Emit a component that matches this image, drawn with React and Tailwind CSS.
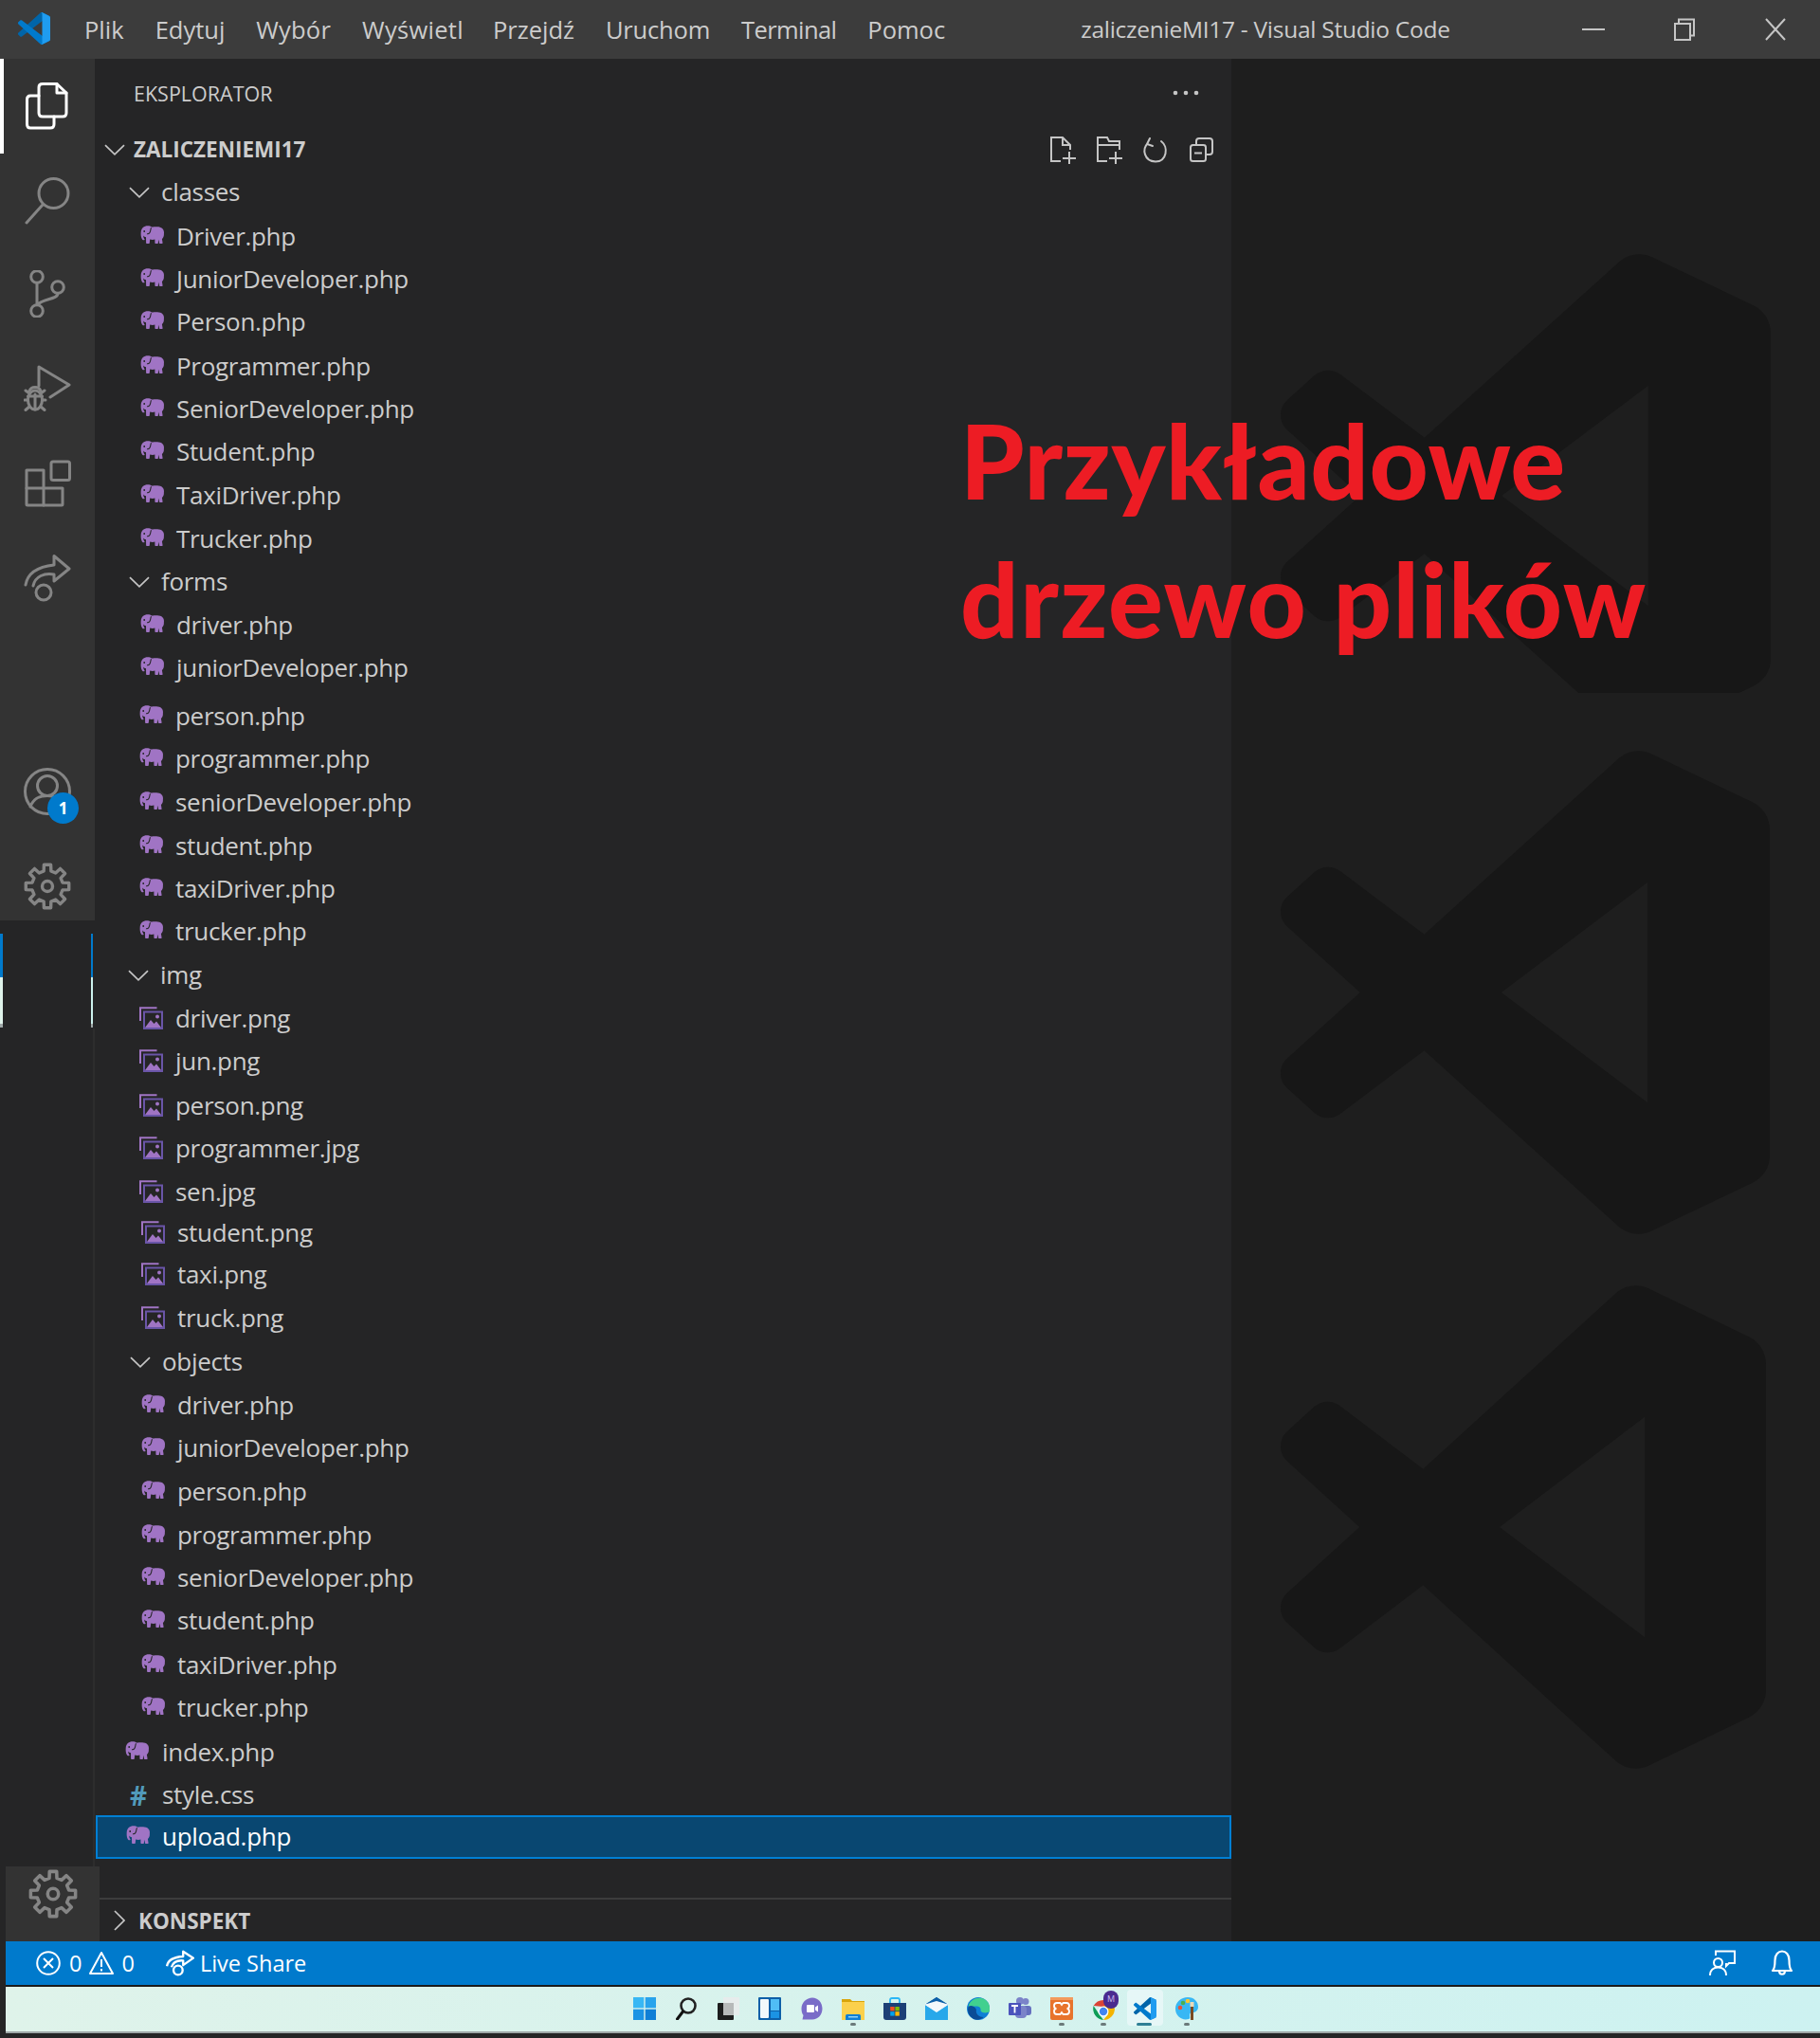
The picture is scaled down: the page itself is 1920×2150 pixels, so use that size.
import React from "react";

const A = "#858585";

function gearPath(cx, cy, R, r, teeth) {
  const pts = [];
  const step = (Math.PI * 2) / teeth;
  for (let i = 0; i < teeth; i++) {
    const a = i * step - Math.PI / 2;
    const w = step * 0.2;
    const v = step * 0.3;
    const p = (rad, ang) => `${(cx + rad * Math.cos(ang)).toFixed(2)} ${(cy + rad * Math.sin(ang)).toFixed(2)}`;
    pts.push(p(r, a - v), p(R, a - w), p(R, a + w), p(r, a + v));
  }
  return "M" + pts.join(" L") + " Z";
}

function Gear({ className = "w-[50px] h-[50px]" }) {
  return (
    <svg viewBox="0 0 50 50" className={className} fill="none" stroke={A} strokeWidth="3.4" strokeLinejoin="round">
      <path d={gearPath(25, 25, 23, 16.5, 8)} />
      <circle cx="25" cy="25" r="5.5" />
    </svg>
  );
}

const Svg = ({ children, sw = 3, color = A }) => (
  <svg viewBox="0 0 50 50" className="w-[50px] h-[50px]" fill="none" stroke={color} strokeWidth={sw} strokeLinejoin="round" strokeLinecap="round">
    {children}
  </svg>
);

const LOGO_M = "M70.9119 99.3171C72.4869 99.9307 74.2828 99.8914 75.8725 99.1264L96.4608 89.2197C98.6242 88.1787 100 85.9892 100 83.5872V16.4133C100 14.0113 98.6243 11.8218 96.4609 10.7808L75.8725 0.873756C73.7862 -0.130129 71.3446 0.11576 69.5135 1.44695C69.252 1.63711 69.0028 1.84943 68.769 2.08341L29.3551 38.0415L12.1872 25.0096C10.589 23.7965 8.35363 23.8959 6.86933 25.2461L1.36303 30.2549C-0.452552 31.9064 -0.454633 34.7627 1.35853 36.417L16.2471 50.0001L1.35853 63.5832C-0.454633 65.2374 -0.452552 68.0938 1.36303 69.7453L6.86933 74.7541C8.35363 76.1043 10.589 76.2037 12.1872 74.9905L29.3551 61.9587L68.769 97.9167C69.3925 98.5406 70.1246 99.0104 70.9119 99.3171ZM75.0152 27.2989L45.1091 50.0001L75.0152 72.7012V27.2989Z";

function VSLogo({ className }) {
  return (
    <svg viewBox="0 0 100 100" className={className}>
      <path fill="#0065A9" d="M96.4614 10.7962L75.8569 0.875542C73.4719 -0.272773 70.6217 0.211611 68.75 2.08333L1.29858 63.5832C-0.515693 65.2373 -0.513607 68.0937 1.30308 69.7452L6.81272 74.754C8.29793 76.1042 10.5347 76.2036 12.1338 74.9905L93.3609 13.3699C96.086 11.3026 100 13.2462 100 16.6667V16.4275C100 14.0265 98.6246 11.8378 96.4614 10.7962Z" />
      <path fill="#007ACC" d="M96.4614 89.2038L75.8569 99.1245C73.4719 100.273 70.6217 99.7884 68.75 97.9167L1.29858 36.4169C-0.515693 34.7627 -0.513607 31.9063 1.30308 30.2548L6.81272 25.246C8.29793 23.8958 10.5347 23.7964 12.1338 25.0095L93.3609 86.6301C96.086 88.6974 100 86.7538 100 83.3334V83.5726C100 85.9735 98.6246 88.1622 96.4614 89.2038Z" />
      <path fill="#1F9CF0" d="M75.8578 99.1263C73.4721 100.274 70.6219 99.7885 68.75 97.9166C71.0564 100.223 75 98.5895 75 95.3278V4.67213C75 1.41039 71.0564 -0.223106 68.75 2.08329C70.6219 0.211402 73.4721 -0.273666 75.8578 0.873633L96.4587 10.7807C98.6234 11.8217 100 14.0112 100 16.4132V83.5871C100 85.9891 98.6234 88.1786 96.4586 89.2196L75.8578 99.1263Z" />
    </svg>
  );
}

const Watermark = ({ className }) => (
  <svg viewBox="0 0 100 100" preserveAspectRatio="none" className={className}>
    <path fill="#171717" fillRule="evenodd" d={LOGO_M} />
  </svg>
);

function Elephant() {
  return (
    <svg viewBox="0 0 26 20" className="w-[26px] h-[20px] shrink-0 mt-[-4px]">
      <path fill="#a074c4" d="M8 .3C3.8.3.9 3 .7 7c-.2 2.6 0 5 1 7 .7 1.5 2.4 1.7 3 .4-1-.6-1.5-2.2-1.4-3.8.6 1 1.6 1.5 2.7 1.6l.1 6.1c0 .4.3.7.7.7h2.3c.4 0 .7-.3.7-.7l.4-3.8c1.7.5 3.5.5 5.2.1v3.7c0 .4.3.7.7.7h2c.4 0 .6-.3.7-.6l.5-3.6.8 3.6c.1.4.4.6.7.6h2.2c.4 0 .7-.4.6-.8l-.7-4.2c1.4-1.2 2.2-3 2-5.2C25.7 4 22.500 1.300 18 1.300c-2.500 0-4.600.2-6 .2C11 .7 9.600.3 8 .3Z" />
      <path fill="none" stroke="#252526" strokeWidth="1.1" d="M11.500 2.200c-.8 1.400-.3 3.200-1.600 5.300-.6 1-1.700 1.400-2.900 1.200" />
      <circle cx="4.200" cy="6" r=".9" fill="#252526" />
    </svg>
  );
}

function ImgIcon() {
  return (
    <svg viewBox="0 0 25 24" className="w-[25px] h-[24px] shrink-0 mt-[-2px] mr-[1px]" fill="none">
      <path d="M1 15V1.200H18.500" stroke="#a074c4" strokeWidth="2" />
      <rect x="5" y="5.500" width="19" height="17.500" stroke="#6a55a8" strokeWidth="2" />
      <path d="M6 22l6-8 3.500 4 2.500-2.500 5 6.500Z" fill="#a074c4" />
      <circle cx="19" cy="10.500" r="2" fill="#a074c4" />
    </svg>
  );
}

const Chevron = () => (
  <svg viewBox="0 0 22 12" className="w-[22px] h-[12px] shrink-0" fill="none" stroke="#c5c5c5" strokeWidth="1.700">
    <path d="M1 1.200 11 10.800 21 1.200" />
  </svg>
);

const tree = [
  ["classes", "f", "a", ""],
  ["Driver.php", "p", "a", "mt-[5px]"],
  ["JuniorDeveloper.php", "p", "a", "mt-[3px]"],
  ["Person.php", "p", "a", "mt-[3px]"],
  ["Programmer.php", "p", "a", "mt-[5px]"],
  ["SeniorDeveloper.php", "p", "a", "mt-[3px]"],
  ["Student.php", "p", "a", "mt-[3px]"],
  ["TaxiDriver.php", "p", "a", "mt-[4px]"],
  ["Trucker.php", "p", "a", "mt-[4px]"],
  ["forms", "f", "a", "mt-[3px]"],
  ["driver.php", "p", "a", "mt-[4px]"],
  ["juniorDeveloper.php", "p", "a", "mt-[3px]"],
  ["person.php", "p", "b", "mt-[9px]"],
  ["programmer.php", "p", "b", "mt-[3px]"],
  ["seniorDeveloper.php", "p", "b", "mt-[4px]"],
  ["student.php", "p", "b", "mt-[4px]"],
  ["taxiDriver.php", "p", "b", "mt-[3px]"],
  ["trucker.php", "p", "b", "mt-[3px]"],
  ["img", "f", "b", "mt-[4px]"],
  ["driver.png", "i", "b", "mt-[4px]"],
  ["jun.png", "i", "b", "mt-[3px]"],
  ["person.png", "i", "b", "mt-[5px]"],
  ["programmer.jpg", "i", "b", "mt-[3px]"],
  ["sen.jpg", "i", "b", "mt-[4px]"],
  ["student.png", "i", "c", "mt-[1px]"],
  ["taxi.png", "i", "c", "mt-[2px]"],
  ["truck.png", "i", "c", "mt-[4px]"],
  ["objects", "f", "c", "mt-[4px]"],
  ["driver.php", "p", "c", "mt-[4px]"],
  ["juniorDeveloper.php", "p", "c", "mt-[3px]"],
  ["person.php", "p", "c", "mt-[4px]"],
  ["programmer.php", "p", "c", "mt-[4px]"],
  ["seniorDeveloper.php", "p", "c", "mt-[3px]"],
  ["student.php", "p", "c", "mt-[3px]"],
  ["taxiDriver.php", "p", "c", "mt-[5px]"],
  ["trucker.php", "p", "c", "mt-[3px]"],
];

const FOLDER_PAD = { a: "pl-[36px] gap-[12px]", b: "pl-[35px] gap-[12px]", c: "pl-[37px] gap-[12px]" };
const FILE_PAD = { a: "pl-[48px] gap-[12px]", b: "pl-[47px] gap-[12px]", c: "pl-[49px] gap-[12px]" };

function Row({ name, kind, group, mt }) {
  if (kind === "f") {
    return (
      <div className={`flex items-center h-[42px] ${FOLDER_PAD[group]} ${mt}`}>
        <Chevron />
        <span className="mt-[-1px]">{name}</span>
      </div>
    );
  }
  return (
    <div className={`flex items-center h-[42px] ${FILE_PAD[group]} ${mt}`}>
      {kind === "p" ? <Elephant /> : <ImgIcon />}
      <span className="mt-[-1px]">{name}</span>
    </div>
  );
}

const menu = [
  ["Plik", ""],
  ["Edytuj", ""],
  ["Wybór", "tracking-[0.2px]"],
  ["Wyświetl", "tracking-[0.3px]"],
  ["Przejdź", "ml-[-2px]"],
  ["Uruchom", "tracking-[-0.2px]"],
  ["Terminal", "tracking-[-0.6px]"],
  ["Pomoc", ""],
];

function TitleBar() {
  return (
    <div className="h-[62px] bg-[#3c3c3c] flex items-center text-[#cccccc] shrink-0">
      <VSLogo className="w-[34px] h-[34px] ml-[19px] mt-[-3px]" />
      <div className="flex gap-[33px] ml-[36px] text-[25.500px]">
        {menu.map(([m, c]) => (
          <span key={m} className={c}>{m}</span>
        ))}
      </div>
      <span className="ml-[143px] text-[24.500px] tracking-[-0.27px]">zaliczenieMI17 - Visual Studio Code</span>
      <div className="ml-auto flex items-center mr-[35px] gap-[72px]">
        <svg viewBox="0 0 24 24" className="w-[24px] h-[24px]" stroke="#c5c5c5" strokeWidth="2" fill="none"><path d="M0 12H24" /></svg>
        <svg viewBox="0 0 24 24" className="w-[24px] h-[24px]" stroke="#c5c5c5" strokeWidth="2" fill="none"><rect x="2" y="6" width="16" height="17" /><path d="M6 6V1.500H22V18.500H18" /></svg>
        <svg viewBox="0 0 24 24" className="w-[24px] h-[24px]" stroke="#c5c5c5" strokeWidth="2" fill="none"><path d="M2 1 22 23M22 1 2 23" /></svg>
      </div>
    </div>
  );
}

function ActivityBar() {
  const item = "h-[100px] flex items-center justify-center shrink-0";
  return (
    <div className="w-[100px] shrink-0 flex flex-col relative">
      <div className="h-[909px] bg-[#333333] flex flex-col shrink-0">
        <div className={`${item} border-l-4 border-white pr-[4px]`}>
          <Svg color="#ffffff">
            <path d="M20 1.500H35L45 11V32Q45 36 41 36H20Q16 36 16 32V5Q16 1.500 20 1.500Z" />
            <path d="M35 1.500V11H45" />
            <path d="M16 14H7Q3.500 14 3.500 18V44Q3.500 48 7 48H28Q32 48 32 44V36" />
          </Svg>
        </div>
        <div className="h-[98px] pt-[2px] flex items-center justify-center shrink-0">
          <Svg>
            <circle cx="31.500" cy="17" r="15.500" />
            <path d="M20 29 3 48" />
          </Svg>
        </div>
        <div className={item}>
          <Svg>
            <circle cx="14" cy="7" r="6.300" />
            <circle cx="14" cy="43" r="6.300" />
            <circle cx="36" cy="18" r="6.300" />
            <path d="M14 13.500V36.500M36 24.500C36 31 20 30 14.500 36.500" />
          </Svg>
        </div>
        <div className={item}>
          <Svg>
            <path d="M16 22V2L48 21 28 34" />
            <ellipse cx="12" cy="37" rx="7.500" ry="10" />
            <path d="M6 27.500C8 22 16 22 18 27.500M4.500 33H19.500M12 31V47M2 27 6 30M22 27 18 30M1 37H4.500M23 37H19.500M2 47.500 6 44M22 47.500 18 44" />
          </Svg>
        </div>
        <div className={item}>
          <Svg>
            <path d="M3 11H21V30H41V47Q41 48 40 48H4Q3 48 3 47Z" />
            <path d="M21 30V48M3 30H21" />
            <rect x="29" y="2" width="19.500" height="19.500" rx="2" />
          </Svg>
        </div>
        <div className={item}>
          <Svg>
            <circle cx="21" cy="40" r="8" />
            <path d="M2 32C4 20 14 13 32 11V1.500L48 15 32 28V21C22 19 12 23 10 33" />
          </Svg>
        </div>
        <div className="flex-1" />
        <div className={`${item} relative`}>
          <Svg>
            <circle cx="25" cy="25" r="23.500" />
            <circle cx="25" cy="19" r="10.500" />
            <path d="M7 41C11 31 18 29.500 25 29.500S39 31 43 41" />
          </Svg>
          <span className="absolute left-[50px] top-[51px] w-[33px] h-[33px] rounded-full bg-[#007acc] text-white text-[17px] font-bold flex items-center justify-center">1</span>
        </div>
        <div className="h-[86px] shrink-0 flex justify-center pt-[25px]">
          <Gear />
        </div>
      </div>
      <div className="h-[114px] shrink-0 bg-[#252526] flex justify-between">
        <div className="w-[3px] flex flex-col pt-[14px]">
          <div className="h-[46px] bg-[#007acc]" />
          <div className="h-[49px] bg-[#dff3ea]" />
          <div className="h-[4px] bg-[#9fa8a8]" />
        </div>
        <div className="w-[2px] flex flex-col pt-[14px] mr-[2px]">
          <div className="h-[46px] bg-[#007acc]" />
          <div className="h-[49px] bg-[#cdf2ee]" />
          <div className="h-[4px] bg-[#9fa8a8]" />
        </div>
      </div>
      <div className="flex-1 bg-[#252526] border-r-2 border-[#2d2d2d]" />
      <div className="h-[79px] w-[99px] ml-[6px] bg-[#333333] shrink-0 relative flex justify-center pt-[3px]">
        <Gear className="w-[52px] h-[52px]" />
      </div>
    </div>
  );
}

const ActionSvg = ({ children }) => (
  <svg viewBox="0 0 30 30" className="w-[30px] h-[30px]" fill="none" stroke="#c5c5c5" strokeWidth="2">
    {children}
  </svg>
);

function Sidebar() {
  return (
    <div className="w-[1199px] shrink-0 bg-[#252526] flex flex-col text-[#cccccc] text-[26px] tracking-[-0.3px]">
      <div className="h-[72px] flex items-center pl-[41px] text-[21.500px] tracking-normal pr-[34px] shrink-0">
        <span className="mt-[2px]">EKSPLORATOR</span>
        <svg viewBox="0 0 28 6" className="w-[28px] h-[6px] ml-auto" fill="#c5c5c5">
          <circle cx="3" cy="3" r="2.300" />
          <circle cx="14" cy="3" r="2.300" />
          <circle cx="25" cy="3" r="2.300" />
        </svg>
      </div>
      <div className="h-[48px] flex items-center pl-[10px] shrink-0 pr-[16px]">
        <Chevron />
        <span className="ml-[9px] font-bold text-[22.500px] tracking-normal">ZALICZENIEMI17</span>
        <div className="ml-auto flex gap-[19px] mt-[-1px]">
          <ActionSvg>
            <path d="M13 27H3V2H15L23 10V15M15 2V10H23M15 24H29M22 17V30" />
          </ActionSvg>
          <ActionSvg>
            <path d="M13 27H3V2H13L15 6H26V15M3 10H26M15 24H29M22 17V30" />
          </ActionSvg>
          <ActionSvg>
            <path d="M9 3 6 9 12 11M6.500 8.500C1 14 2.500 27 15 27.500 27 27.500 29 12 21 6" strokeLinecap="round" />
          </ActionSvg>
          <ActionSvg>
            <rect x="3" y="10" width="16" height="17" rx="2.500" />
            <path d="M9 10V6Q9 3 12 3H23Q26 3 26 6V17Q26 20 23 20H19M7 18.500H15" />
          </ActionSvg>
        </div>
      </div>
      {tree.map(([n, k, g, m], i) => (
        <Row key={i} name={n} kind={k} group={g} mt={m} />
      ))}
      <div className="flex items-center h-[42px] pl-[32px] gap-[13px] mt-[5px]">
        <Elephant />
        <span className="mt-[-1px]">index.php</span>
      </div>
      <div className="flex items-center h-[42px] pl-[37px] gap-[15px] mt-[3px]">
        <span className="text-[#519aba] font-bold text-[28px] leading-none w-[19px]">#</span>
        <span className="mt-[-1px]">style.css</span>
      </div>
      <div className="flex items-center h-[46px] pl-[30px] gap-[12px] ml-[1px] border-2 border-[#007fd4] bg-[#094771] text-white">
        <Elephant />
        <span className="mt-[-1px]">upload.php</span>
      </div>
      <div className="flex-1" />
      <div className="h-[46px] border-t-2 border-[#3c3c3c] ml-[5px] flex items-center pl-[15px] shrink-0">
        <svg viewBox="0 0 12 22" className="w-[12px] h-[22px]" fill="none" stroke="#c5c5c5" strokeWidth="1.700"><path d="M1 1 11 11 1 21" /></svg>
        <span className="ml-[14px] mt-[2px] font-bold text-[22.500px] tracking-normal">KONSPEKT</span>
      </div>
    </div>
  );
}

function Editor() {
  return (
    <div className="flex-1 bg-[#1e1e1e] relative overflow-hidden">
      <div className="absolute left-[52px] top-[205px] w-[517px] h-[464px] overflow-hidden">
        <Watermark className="w-[517px] h-[512px]" />
      </div>
      <Watermark className="absolute left-[52px] top-[729px] w-[516px] h-[512px]" />
      <Watermark className="absolute left-[52px] top-[1293px] w-[512px] h-[512px]" />
    </div>
  );
}

function StatusBar() {
  return (
    <div className="h-[46px] ml-[6px] bg-[#007acc] flex items-center text-white text-[23.500px] shrink-0 pl-[32px] pr-[28px]">
      <svg viewBox="0 0 26 26" className="w-[26px] h-[26px]" fill="none" stroke="#fff" strokeWidth="2"><circle cx="13" cy="13" r="11.800" /><path d="M8 8 18 18M18 8 8 18" /></svg>
      <span className="ml-[9px] mt-[1px]">0</span>
      <svg viewBox="0 0 26 26" className="w-[26px] h-[26px] ml-[8px]" fill="none" stroke="#fff" strokeWidth="2"><path d="M13 2 25 24H1Z" strokeLinejoin="round" /><path d="M13 9V17M13 19V21.500" /></svg>
      <span className="ml-[8px] mt-[1px]">0</span>
      <svg viewBox="0 0 28 26" className="w-[30px] h-[28px] ml-[33px]" fill="none" stroke="#fff" strokeWidth="2.200" strokeLinejoin="round"><circle cx="12" cy="20" r="4.500" /><path d="M1 16C2 10 8 7 17 6.500V1.500L27 8 17 15V10.500C11 10 7 12 5.500 17" /></svg>
      <span className="ml-[6px] mt-[1px]">Live Share</span>
      <svg viewBox="0 0 28 28" className="w-[28px] h-[28px] ml-auto" fill="none" stroke="#fff" strokeWidth="2"><path d="M7 6V1.500H27V14H21L18 17V14" /><circle cx="9.500" cy="13.500" r="4.500" /><path d="M1 27C1 21 5 18.500 9.500 18.500S18 21 18 27" /></svg>
      <svg viewBox="0 0 24 28" className="w-[24px] h-[28px] ml-[37px]" fill="none" stroke="#fff" strokeWidth="2.200"><path d="M2 22C4 20 4.500 17 4.500 11 4.500 5 8 1.500 12 1.500S19.500 5 19.500 11C19.500 17 20 20 22 22ZM9 22C9 27 15 27 15 22" strokeLinejoin="round" /></svg>
    </div>
  );
}

const TB = ({ children }) => (
  <svg viewBox="0 0 24 24" className="w-[24px] h-[24px] shrink-0">{children}</svg>
);

function Taskbar() {
  return (
    <div className="h-[51px] ml-[6px] border-t-2 border-b-2 border-t-[#1b1b1b] border-b-[#9fa8a8] bg-gradient-to-r from-[#dff3ea] to-[#cdf2f1] flex items-center pl-[662px] pb-[2px] gap-[20px] relative shrink-0">
      <TB>
        <rect x="0" y="0" width="11.300" height="11.300" fill="#38b7f4" />
        <rect x="12.700" y="0" width="11.300" height="11.300" fill="#28a3ec" />
        <rect x="0" y="12.700" width="11.300" height="11.300" fill="#1b93e4" />
        <rect x="12.700" y="12.700" width="11.300" height="11.300" fill="#0f7fd6" />
      </TB>
      <TB>
        <circle cx="14" cy="9" r="7.500" fill="none" stroke="#222" strokeWidth="2.600" />
        <path d="M8.500 15 2.500 23" stroke="#111" strokeWidth="3" strokeLinecap="round" />
      </TB>
      <TB>
        <rect x="1" y="6" width="17" height="18" rx="1" fill="#1d1d1d" />
        <rect x="7" y="0" width="17" height="19" rx="1" fill="#e7ecec" />
        <rect x="7" y="6" width="11" height="13" fill="#b7b9b9" />
      </TB>
      <TB>
        <rect x="0" y="0" width="24" height="24" fill="#0d5fa8" rx="1" />
        <rect x="2" y="2" width="9" height="20" fill="#f3f8fb" rx="1" />
        <rect x="13" y="2" width="9" height="12" fill="#50bdf5" />
        <rect x="13" y="15" width="9" height="7" fill="#1b93e4" />
      </TB>
      <TB>
        <path d="M13 .5C19 .5 23.500 5.500 23.500 12S19 23.500 13 23.500H2.500L3.500 19C2 17 1.500 14.500 1.500 12 1.500 5.500 7 .5 13 .5Z" fill="#7a6cc8" />
        <rect x="7" y="8" width="8" height="8" rx="1" fill="#fff" />
        <path d="M16 10.500 19 8.500V15.500L16 13.500Z" fill="#fff" />
      </TB>
      <div className="relative w-[24px] h-[24px] shrink-0">
        <TB>
          <path d="M0 2H9L11 4H24V24H0Z" fill="#d9a50a" />
          <rect x="0" y="5" width="24" height="19" fill="#fbd04c" />
          <path d="M4 24V19.500Q4 18 5.500 18H18.500Q20 18 20 19.500V24Z" fill="#0f7fd6" />
          <rect x="7" y="20" width="10" height="1.500" fill="#8fd3f7" />
        </TB>
        <span className="absolute left-[9px] top-[27px] w-[6px] h-[3px] rounded-full bg-[#6b7a7a]" />
      </div>
      <TB>
        <path d="M7 6V3Q7 1 9 1H15Q17 1 17 3V6" fill="none" stroke="#29b6f6" strokeWidth="1.800" />
        <path d="M0 6H24V21Q24 24 21 24H3Q0 24 0 21Z" fill="#1d3f76" />
        <rect x="7.200" y="10" width="4.400" height="4.400" fill="#f25022" />
        <rect x="12.400" y="10" width="4.400" height="4.400" fill="#7fba00" />
        <rect x="7.200" y="15.200" width="4.400" height="4.400" fill="#00a4ef" />
        <rect x="12.400" y="15.200" width="4.400" height="4.400" fill="#ffb900" />
      </TB>
      <TB>
        <path d="M0 8 12 0 24 8V11H0Z" fill="#0d5fa8" />
        <rect x="0" y="8" width="24" height="16" fill="#28a8ea" />
        <path d="M0 8 12 16 24 8V6.500H12 0Z" fill="#fff" />
        <path d="M0 8 12 2 24 8 12 15Z" fill="#f3f8fb" />
        <path d="M12 0 24 7.500 12 4 0 7.500Z" fill="#0d5fa8" />
      </TB>
      <TB>
        <circle cx="12" cy="12" r="12" fill="#0f7fd6" />
        <path d="M2 8C5 1 15-2 21 4 24 7 24.500 11 24 15 22 17 16 17 14.500 14.500 15 12 14 10 11 9.500 7 9 3 10 1.500 14Z" fill="#41d08f" />
        <path d="M10 13C9 17 12 21 17.500 21 15 23.500 11 24.500 7 23 2 20 0 15 1.500 10 4 8 8 9 10 13Z" fill="#0b4c96" />
      </TB>
      <TB>
        <circle cx="18" cy="4.500" r="3.500" fill="#7b83c9" />
        <rect x="15" y="9" width="9" height="10" rx="3" fill="#6670bf" />
        <circle cx="12" cy="4" r="4" fill="#7b83c9" />
        <rect x="7" y="9" width="12" height="13" rx="4" fill="#7b83c9" />
        <rect x="0" y="6" width="13" height="13" rx="1" fill="#4b53bc" />
        <path d="M3 9H10M6.500 9V16.500" stroke="#fff" strokeWidth="1.800" />
      </TB>
      <div className="relative w-[24px] h-[24px] shrink-0">
        <TB>
          <rect x="0" y="0" width="24" height="24" rx="2" fill="#e8742c" />
          <rect x="0" y="0" width="24" height="3" fill="#f39a5c" />
          <path d="M7 6H10.500L12 8 13.500 6H17Q20 6 20 9T17.500 12Q20 12 20 15T17 18H13.500L12 16 10.500 18H7Q4 18 4 15T6.500 12Q4 12 4 9T7 6Z" fill="none" stroke="#fff" strokeWidth="1.800" />
        </TB>
        <span className="absolute left-[9px] top-[27px] w-[6px] h-[3px] rounded-full bg-[#6b7a7a]" />
      </div>
      <div className="relative w-[24px] h-[24px] shrink-0">
        <TB>
          <path d="M1.600 6A12 12 0 0 1 22.400 6L12 7Z" fill="#db4437" transform="translate(0 3)" />
          <path d="M12 24A12 12 0 0 1 1.600 9L7 17Z" fill="#0f9d58" />
          <path d="M12 24A12 12 0 0 0 24 12L22 9H12L17 18Z" fill="#f4b400" />
          <circle cx="12" cy="15" r="5.500" fill="#fff" />
          <circle cx="12" cy="15" r="4.200" fill="#4285f4" />
        </TB>
        <span className="absolute left-[12px] top-[-7px] w-[16px] h-[19px] rounded-full bg-[#4a2a8f] text-[#cbb9ee] text-[9px] flex items-center justify-center">M</span>
        <span className="absolute left-[9px] top-[27px] w-[6px] h-[3px] rounded-full bg-[#6b7a7a]" />
      </div>
      <div className="relative w-[24px] h-[24px] shrink-0">
        <div className="absolute left-[-7px] top-[-8px] w-[38px] h-[38px] rounded-[4px] bg-[#e6f7f7]" />
        <VSLogo className="relative w-[24px] h-[24px]" />
        <span className="absolute left-[3px] top-[27px] w-[16px] h-[3px] rounded-full bg-[#2f7f95]" />
      </div>
      <div className="relative w-[24px] h-[24px] shrink-0">
        <TB>
          <path d="M13 0C20 0 24 5 24 10 24 14 21 16 18 16 16 16 15 17 15 19 15 21 16 22 14 23 7 25 0 20 0 12 0 5 6 0 13 0Z" fill="#38b7f4" />
          <circle cx="5" cy="11" r="2.300" fill="#e5543a" />
          <circle cx="8" cy="6" r="2.300" fill="#4caf50" />
          <circle cx="13" cy="4" r="2.300" fill="#f7c531" />
          <rect x="16" y="9" width="3" height="15" fill="#7a4a22" />
          <rect x="15.500" y="5" width="4" height="5" fill="#e9d9b8" />
        </TB>
        <span className="absolute left-[9px] top-[27px] w-[6px] h-[3px] rounded-full bg-[#6b7a7a]" />
      </div>
    </div>
  );
}

export default function App() {
  return (
    <div className="w-[1920px] h-[2150px] bg-[#252526] flex flex-col relative overflow-hidden font-['Open_Sans',sans-serif]">
      <TitleBar />
      <div className="flex h-[1986px] shrink-0">
        <ActivityBar />
        <Sidebar />
        <Editor />
      </div>
      <StatusBar />
      <Taskbar />
      <div className="absolute left-[1013px] top-[412px] font-['Lato',sans-serif] font-black text-[#ed1c24] text-[108px] leading-[146px]">
        <div className="tracking-[0.5px]">Przykładowe</div>
        <div className="tracking-[1.5px]">drzewo plików</div>
      </div>
    </div>
  );
}
